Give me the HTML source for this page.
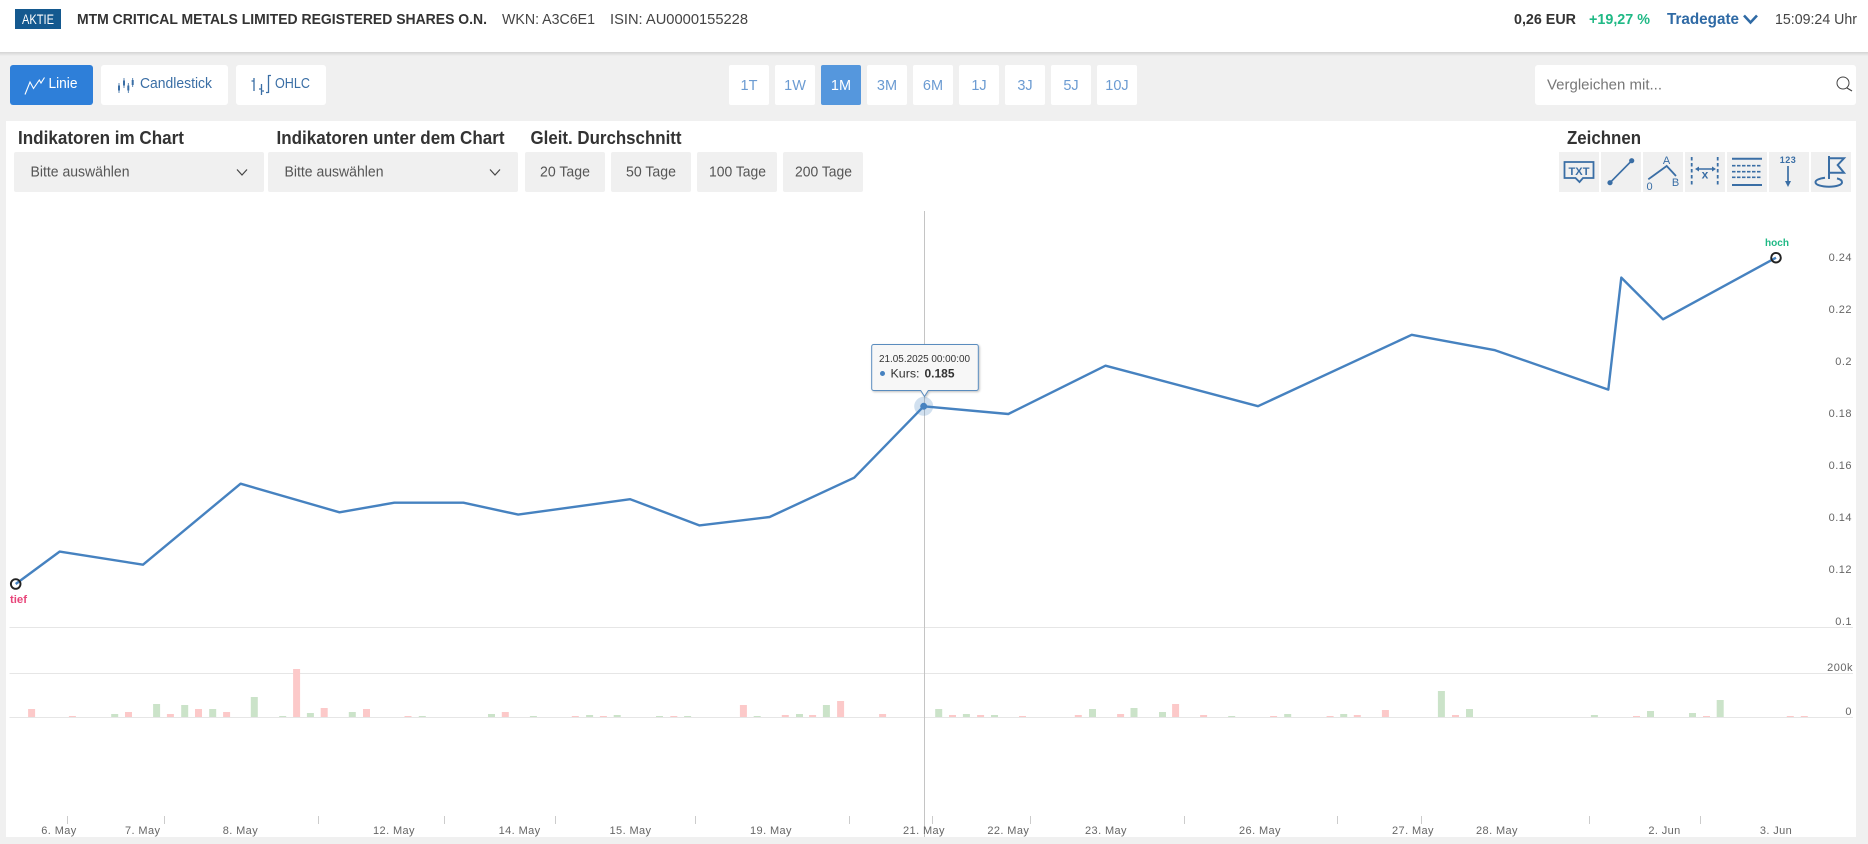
<!DOCTYPE html>
<html lang="de"><head><meta charset="utf-8"><title>Chart</title>
<style>
html,body{margin:0;padding:0;background:#f0f0f0;width:1868px;height:844px;overflow:hidden}
svg{display:block}
text{font-family:"Liberation Sans",sans-serif}
.b{font-weight:bold}
.ax{font-size:11px;fill:#666;text-anchor:middle}
.ay{font-size:11px;fill:#666;text-anchor:end}
.tm{font-size:14.5px;fill:#6b9bd2;text-anchor:middle}
.h{font-size:18px;font-weight:bold;fill:#333}
.s{font-size:15px;fill:#555}
.ic{fill:none;stroke:#3a6ea5}
</style></head><body>
<svg width="1868" height="844" viewBox="0 0 1868 844" xmlns="http://www.w3.org/2000/svg">
<defs>
<linearGradient id="sh" x1="0" y1="0" x2="0" y2="1"><stop offset="0" stop-color="#d4d4d4"/><stop offset="1" stop-color="#f0f0f0"/></linearGradient>
<filter id="ts" x="-10%" y="-10%" width="120%" height="125%"><feDropShadow dx="1" dy="1" stdDeviation="1" flood-color="#000" flood-opacity=".25"/></filter>
</defs>
<rect width="1868" height="844" fill="#f0f0f0"/>
<!-- header -->
<rect width="1868" height="52" fill="#fff"/>
<rect y="52" width="1868" height="4" fill="url(#sh)"/>
<rect x="15" y="9" width="46" height="20" fill="#14598f"/>
<text x="22" y="24" font-size="14" fill="#fff" textLength="32" lengthAdjust="spacingAndGlyphs">AKTIE</text>
<text class="b" x="77" y="24" font-size="15" fill="#333" textLength="410" lengthAdjust="spacingAndGlyphs">MTM CRITICAL METALS LIMITED REGISTERED SHARES O.N.</text>
<text x="502" y="24" font-size="15" fill="#444" textLength="93" lengthAdjust="spacingAndGlyphs">WKN: A3C6E1</text>
<text x="610" y="24" font-size="15" fill="#444" textLength="138" lengthAdjust="spacingAndGlyphs">ISIN: AU0000155228</text>
<text class="b" x="1514" y="24" font-size="15" fill="#333" textLength="62" lengthAdjust="spacingAndGlyphs">0,26 EUR</text>
<text class="b" x="1589" y="24" font-size="15" fill="#1fb985" textLength="61" lengthAdjust="spacingAndGlyphs">+19,27 %</text>
<text class="b" x="1667" y="24" font-size="16" fill="#2f6aa5" textLength="72" lengthAdjust="spacingAndGlyphs">Tradegate</text>
<path d="M1744 15.500l6.500 7 6.500-7" fill="none" stroke="#2f6aa5" stroke-width="2.600"/>
<text x="1775" y="24" font-size="15" fill="#444" textLength="82" lengthAdjust="spacingAndGlyphs">15:09:24 Uhr</text>
<!-- chart type buttons -->
<rect x="10" y="65" width="83" height="40" rx="3" fill="#2e7fd9"/>
<path d="M25 94.500L30 82 33.500 88.500 39.300 80 41 83 44.500 77.500" fill="none" stroke="#fff" stroke-width="1.100"/>
<text x="48.500" y="88" font-size="15" fill="#fff" textLength="29" lengthAdjust="spacingAndGlyphs">Linie</text>
<rect x="101" y="65" width="127" height="40" rx="3" fill="#fff"/>
<g fill="#3a6ea5"><path d="M119 83v10M124 78v10M128.300 83v10M132.700 78v9" fill="none" stroke="#3a6ea5" stroke-width=".8"/><rect x="118" y="85.500" width="2" height="5"/><rect x="123" y="80.500" width="2" height="5"/><rect x="127.300" y="85.500" width="2" height="5"/><rect x="131.700" y="80" width="2" height="5"/></g>
<text x="140" y="88" font-size="15" fill="#3a6ea5" textLength="72" lengthAdjust="spacingAndGlyphs">Candlestick</text>
<rect x="236" y="65" width="90" height="40" rx="3" fill="#fff"/>
<path d="M254 78v13M251.500 81h2.500M261.500 84v11M259 89h2.500M264 91h-2.500M268.500 75v18M271 75.500h-2.500M268.500 92.500h-2.500" fill="none" stroke="#3a6ea5" stroke-width="1.300"/>
<text x="275" y="88" font-size="15" fill="#3a6ea5" textLength="35" lengthAdjust="spacingAndGlyphs">OHLC</text>
<!-- time ranges -->
<g fill="#fff">
<rect x="729" y="65" width="40" height="40" rx="2"/><rect x="775" y="65" width="40" height="40" rx="2"/><rect x="821" y="65" width="40" height="40" rx="2" fill="#5597dd"/><rect x="867" y="65" width="40" height="40" rx="2"/><rect x="913" y="65" width="40" height="40" rx="2"/><rect x="959" y="65" width="40" height="40" rx="2"/><rect x="1005" y="65" width="40" height="40" rx="2"/><rect x="1051" y="65" width="40" height="40" rx="2"/><rect x="1097" y="65" width="40" height="40" rx="2"/>
</g>
<text class="tm" x="749" y="90">1T</text><text class="tm" x="795" y="90">1W</text><text class="tm" x="841" y="90" style="fill:#fff">1M</text><text class="tm" x="887" y="90">3M</text><text class="tm" x="933" y="90">6M</text><text class="tm" x="979" y="90">1J</text><text class="tm" x="1025" y="90">3J</text><text class="tm" x="1071" y="90">5J</text><text class="tm" x="1117" y="90">10J</text>
<!-- search -->
<rect x="1535" y="65" width="321" height="40" rx="3" fill="#fff"/>
<text x="1547" y="89.500" font-size="15" fill="#777" textLength="115" lengthAdjust="spacingAndGlyphs">Vergleichen mit...</text>
<circle cx="1843" cy="83" r="6" fill="none" stroke="#444" stroke-width="1"/><path d="M1847 88l5 3" stroke="#444" stroke-width="1.200"/>
<!-- panel -->
<rect x="6" y="121" width="1850" height="716" fill="#fff"/>
<text class="h" x="18" y="144" textLength="166" lengthAdjust="spacingAndGlyphs">Indikatoren im Chart</text>
<text class="h" x="276.500" y="144" textLength="228" lengthAdjust="spacingAndGlyphs">Indikatoren unter dem Chart</text>
<text class="h" x="530.500" y="144" textLength="151" lengthAdjust="spacingAndGlyphs">Gleit. Durchschnitt</text>
<text class="h" x="1567" y="144" textLength="74" lengthAdjust="spacingAndGlyphs">Zeichnen</text>
<g fill="#f0f0f0">
<rect x="14" y="152" width="250" height="40" rx="2"/><rect x="268" y="152" width="250" height="40" rx="2"/>
<rect x="525" y="152" width="80" height="40" rx="2"/><rect x="611" y="152" width="80" height="40" rx="2"/><rect x="697" y="152" width="80" height="40" rx="2"/><rect x="783" y="152" width="80" height="40" rx="2"/>
<rect x="1559" y="152" width="40" height="40"/><rect x="1601" y="152" width="40" height="40"/><rect x="1643" y="152" width="40" height="40"/><rect x="1685" y="152" width="40" height="40"/><rect x="1727" y="152" width="40" height="40"/><rect x="1769" y="152" width="40" height="40"/><rect x="1811" y="152" width="40" height="40"/>
</g>
<text class="s" x="30.500" y="176.500" textLength="99" lengthAdjust="spacingAndGlyphs">Bitte auswählen</text>
<text class="s" x="284.500" y="176.500" textLength="99" lengthAdjust="spacingAndGlyphs">Bitte auswählen</text>
<path d="M237 169.500l5 5.500 5-5.500M490 169.500l5 5.500 5-5.500" fill="none" stroke="#444" stroke-width="1.200"/>
<text class="s" x="540" y="176.500" textLength="50" lengthAdjust="spacingAndGlyphs">20 Tage</text>
<text class="s" x="626" y="176.500" textLength="50" lengthAdjust="spacingAndGlyphs">50 Tage</text>
<text class="s" x="709" y="176.500" textLength="57" lengthAdjust="spacingAndGlyphs">100 Tage</text>
<text class="s" x="795" y="176.500" textLength="57" lengthAdjust="spacingAndGlyphs">200 Tage</text>
<!-- draw icons -->
<g class="ic" stroke-width="2">
<path d="M1564.500 162h29v16h-10.500l-3.500 4-4-4h-11z" stroke-width="1.800"/>
<path d="M1610 182.700L1631.700 160.700" stroke-width="1.700"/>
<path d="M1648.300 179.300L1666.700 166 1676 176" stroke-width="1.800"/>
<path d="M1691.700 157v29M1717.700 157v29" stroke-dasharray="3.500 2.500" stroke-width="1.800"/>
<path d="M1697 169h17" stroke-width="1.400"/>
<path d="M1732 158.700h30M1732 185h30"/>
<path d="M1732 165.700h30M1732 171.700h30M1732 177.300h30" stroke-dasharray="3.500 1.500" stroke-width="1.700"/>
<path d="M1788 166v15" stroke-width="1.700"/>
<path d="M1829 156v23M1829 158.300h15l-6.300 6.700 6.300 7.700h-15"/>
<path d="M1825 177.800c-5.500 .8-9.500 2-9.500 4.400 0 2.700 6 4.500 13.500 4.500s13-1.800 13-4.500c0-1.800-2-3-5-3.800"/>
</g>
<text class="b" x="1568.500" y="175" font-size="11" fill="#3a6ea5" textLength="21" lengthAdjust="spacingAndGlyphs">TXT</text>
<circle cx="1610" cy="182.700" r="2.600" fill="#3a6ea5"/><circle cx="1631.700" cy="160.700" r="2.600" fill="#3a6ea5"/>
<text x="1666.500" y="164" font-size="11" fill="#3a6ea5" text-anchor="middle">A</text>
<text x="1649.500" y="190" font-size="11" fill="#3a6ea5" text-anchor="middle">0</text>
<text x="1675.500" y="186" font-size="11" fill="#3a6ea5" text-anchor="middle">B</text>
<text class="b" x="1705" y="178.500" font-size="12" fill="#3a6ea5" text-anchor="middle">x</text>
<path d="M1695 169l4-2.500v5zM1716 169l-4-2.500v5z" fill="#3a6ea5"/>
<text class="b" x="1788" y="163" font-size="9" fill="#3a6ea5" text-anchor="middle" letter-spacing=".5">123</text>
<path d="M1785 181h6l-3 6z" fill="#3a6ea5"/>
<!-- grid -->
<path d="M9.500 627.500H1853M9.500 673.500H1853M9.500 717.500H1853" stroke="#e6e6e6" stroke-width="1" fill="none"/>
<!-- volume bars -->
<path fill="#fcc9c9" d="M28.100 717v-8h7v8zM68.900 717v-1h7v1zM125 717v-5h7v5zM166.900 717v-3h7v3zM195 717v-8h7v8zM223.100 717v-5h7v5zM293.100 717v-48h7v48zM320.700 717v-9h7v9zM363 717v-8h7v8zM404.500 717v-1h7v1zM501.800 717v-5h7v5zM571.800 717v-1h7v1zM599.900 717v-1h7v1zM670.300 717v-1h7v1zM739.900 717v-12h7v12zM781.800 717v-2h7v2zM809.100 717v-2h7v2zM837.100 717v-16h7v16zM879.100 717v-3h7v3zM949 717v-2h7v2zM977.100 717v-2h7v2zM1019 717v-1h7v1zM1074.800 717v-2h7v2zM1117.100 717v-3h7v3zM1172.100 717v-13h7v13zM1200.100 717v-2h7v2zM1270.100 717v-1h7v1zM1326.600 717v-1h7v1zM1353.800 717v-2h7v2zM1381.900 717v-7h7v7zM1452 717v-2h7v2zM1633 717v-1h7v1zM1703 717v-1h7v1zM1786.800 717v-1h7v1zM1800.800 717v-1h7v1z"/>
<path fill="#cbe3c9" d="M111.200 717v-3h7v3zM153.100 717v-13h7v13zM181.200 717v-12h7v12zM209.200 717v-8h7v8zM250.800 717v-20h7v20zM279.200 717v-1h7v1zM306.900 717v-4h7v4zM348.800 717v-5h7v5zM418.800 717v-1h7v1zM488 717v-3h7v3zM529.900 717v-1h7v1zM586.100 717v-2h7v2zM613.700 717v-2h7v2zM656 717v-1h7v1zM684.100 717v-1h7v1zM753.700 717v-1h7v1zM796 717v-3h7v3zM822.900 717v-12h7v12zM935.200 717v-8h7v8zM962.900 717v-3h7v3zM991 717v-2h7v2zM1089 717v-8h7v8zM1130.500 717v-9h7v9zM1159 717v-5h7v5zM1228.200 717v-1h7v1zM1284.200 717v-3h7v3zM1340.200 717v-3h7v3zM1437.900 717v-26h7v26zM1466 717v-8h7v8zM1590.900 717v-2h7v2zM1647 717v-6h7v6zM1689 717v-4h7v4zM1716.700 717v-17h7v17z"/>
<!-- ticks -->
<path stroke="#ccc" stroke-width="1" fill="none" d="M67.500 816v8M164.500 816v8M318.500 816v8M444.500 816v8M555.500 816v8M695.500 816v8M849.500 816v8M932.500 816v8M1030.500 816v8M1184.500 816v8M1337.500 816v8M1421.500 816v8M1589.500 816v8M1700.500 816v8"/>
<!-- crosshair -->
<path d="M924.500 211V837" stroke="#c4c4c4" stroke-width="1"/>
<!-- y labels -->
<text class="ay" x="1852" y="261" letter-spacing=".5">0.24</text>
<text class="ay" x="1852" y="313" letter-spacing=".5">0.22</text>
<text class="ay" x="1852" y="365" letter-spacing=".5">0.2</text>
<text class="ay" x="1852" y="417" letter-spacing=".5">0.18</text>
<text class="ay" x="1852" y="469" letter-spacing=".5">0.16</text>
<text class="ay" x="1852" y="521" letter-spacing=".5">0.14</text>
<text class="ay" x="1852" y="573" letter-spacing=".5">0.12</text>
<text class="ay" x="1852" y="625" letter-spacing=".5">0.1</text>
<text class="ay" x="1853" y="671" letter-spacing=".5">200k</text>
<text class="ay" x="1852" y="715" letter-spacing=".5">0</text>
<!-- x labels -->
<g letter-spacing=".4">
<text class="ax" x="59" y="834">6. May</text><text class="ax" x="142.700" y="834">7. May</text><text class="ax" x="240.400" y="834">8. May</text><text class="ax" x="394" y="834">12. May</text><text class="ax" x="519.600" y="834">14. May</text><text class="ax" x="630.500" y="834">15. May</text><text class="ax" x="771" y="834">19. May</text><text class="ax" x="924" y="834">21. May</text><text class="ax" x="1008.300" y="834">22. May</text><text class="ax" x="1106" y="834">23. May</text><text class="ax" x="1260" y="834">26. May</text><text class="ax" x="1413" y="834">27. May</text><text class="ax" x="1497" y="834">28. May</text><text class="ax" x="1664.500" y="834">2. Jun</text><text class="ax" x="1776" y="834">3. Jun</text>
</g>
<!-- line -->
<polyline fill="none" stroke="#4682c0" stroke-width="2.400" stroke-linejoin="round" points="15.700,584 59.600,551.600 143,564.700 240.600,483.700 339.500,512.300 394.300,502.700 463.400,502.700 518.200,514.600 630.200,499.200 699.300,525.400 769.600,517 854.200,477.700 923.700,406.300 1008.300,414 1105.500,365.700 1258,406.200 1411.700,334.800 1495,350.200 1608.300,389.600 1621.300,277.600 1663,319.300 1776,257.700"/>
<circle cx="15.700" cy="584" r="4.800" fill="none" stroke="#222" stroke-width="1.900"/>
<circle cx="1776" cy="257.700" r="4.800" fill="none" stroke="#222" stroke-width="1.900"/>
<text class="b" x="10" y="603" font-size="11" fill="#e8457a" textLength="17" lengthAdjust="spacingAndGlyphs">tief</text>
<text class="b" x="1765" y="246" font-size="10.500" fill="#1fb985" textLength="24" lengthAdjust="spacingAndGlyphs">hoch</text>
<circle cx="923.700" cy="406.300" r="9.500" fill="#4682c0" fill-opacity=".25"/>
<circle cx="923.700" cy="406.300" r="3.500" fill="#4682c0"/>
<!-- tooltip -->
<path d="M873.800 344.500h102.500a2 2 0 0 1 2 2v42a2 2 0 0 1-2 2h-48l-3.800 6-3.800-6h-47a2 2 0 0 1-2-2v-42a2 2 0 0 1 2-2z" fill="#f7f7f7" stroke="#5a8cbe" stroke-width="1" filter="url(#ts)"/>
<text x="879" y="362" font-size="10" fill="#333" textLength="91" lengthAdjust="spacingAndGlyphs">21.05.2025 00:00:00</text>
<circle cx="882.500" cy="373.500" r="2.500" fill="#4682c0"/>
<text x="890.500" y="377.500" font-size="12" fill="#333" textLength="29" lengthAdjust="spacingAndGlyphs">Kurs:</text>
<text class="b" x="924.500" y="377.500" font-size="12" fill="#333" textLength="30" lengthAdjust="spacingAndGlyphs">0.185</text>
</svg>
</body></html>
